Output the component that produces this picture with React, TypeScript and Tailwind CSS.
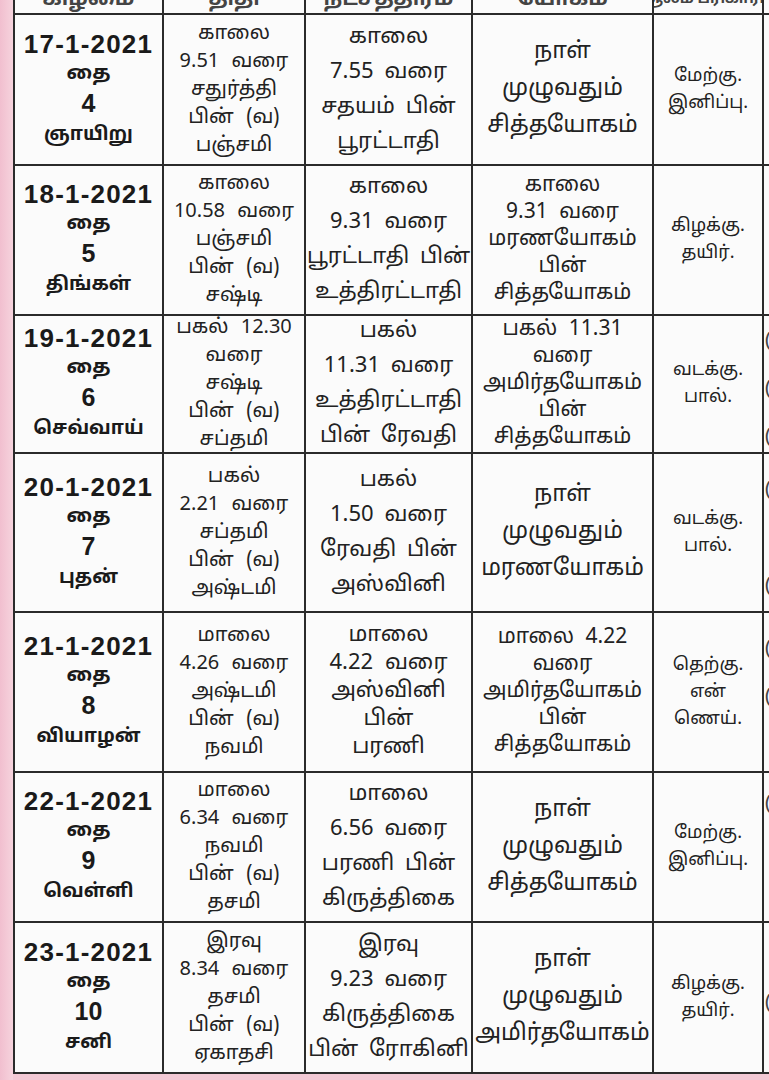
import React from 'react'

type Row = {
  date: string
  month: string
  day: string
  weekday: string
  thithi: string[]
  star: string[]
  yogam: string[]
  soolam: string[]
  edge: string[]
}

const rows: Row[] = [
  {
    date: '17-1-2021', month: 'தை', day: '4', weekday: 'ஞாயிறு',
    thithi: ['காலை', '9.51 வரை', 'சதுர்த்தி', 'பின் (வ)', 'பஞ்சமி'],
    star: ['காலை', '7.55 வரை', 'சதயம் பின்', 'பூரட்டாதி'],
    yogam: ['நாள்', 'முழுவதும்', 'சித்தயோகம்'],
    soolam: ['மேற்கு.', 'இனிப்பு.'],
    edge: ['', '', ''],
  },
  {
    date: '18-1-2021', month: 'தை', day: '5', weekday: 'திங்கள்',
    thithi: ['காலை', '10.58 வரை', 'பஞ்சமி', 'பின் (வ)', 'சஷ்டி'],
    star: ['காலை', '9.31 வரை', 'பூரட்டாதி பின்', 'உத்திரட்டாதி'],
    yogam: ['காலை', '9.31 வரை', 'மரணயோகம்', 'பின்', 'சித்தயோகம்'],
    soolam: ['கிழக்கு.', 'தயிர்.'],
    edge: ['', '', ''],
  },
  {
    date: '19-1-2021', month: 'தை', day: '6', weekday: 'செவ்வாய்',
    thithi: ['பகல் 12.30', 'வரை', 'சஷ்டி', 'பின் (வ)', 'சப்தமி'],
    star: ['பகல்', '11.31 வரை', 'உத்திரட்டாதி', 'பின் ரேவதி'],
    yogam: ['பகல் 11.31', 'வரை', 'அமிர்தயோகம்', 'பின்', 'சித்தயோகம்'],
    soolam: ['வடக்கு.', 'பால்.'],
    edge: ['(', '(', '('],
  },
  {
    date: '20-1-2021', month: 'தை', day: '7', weekday: 'புதன்',
    thithi: ['பகல்', '2.21 வரை', 'சப்தமி', 'பின் (வ)', 'அஷ்டமி'],
    star: ['பகல்', '1.50 வரை', 'ரேவதி பின்', 'அஸ்வினி'],
    yogam: ['நாள்', 'முழுவதும்', 'மரணயோகம்'],
    soolam: ['வடக்கு.', 'பால்.'],
    edge: ['(', '', '('],
  },
  {
    date: '21-1-2021', month: 'தை', day: '8', weekday: 'வியாழன்',
    thithi: ['மாலை', '4.26 வரை', 'அஷ்டமி', 'பின் (வ)', 'நவமி'],
    star: ['மாலை', '4.22 வரை', 'அஸ்வினி', 'பின்', 'பரணி'],
    yogam: ['மாலை 4.22', 'வரை', 'அமிர்தயோகம்', 'பின்', 'சித்தயோகம்'],
    soolam: ['தெற்கு.', 'என்', 'ணெய்.'],
    edge: ['(', '(', ''],
  },
  {
    date: '22-1-2021', month: 'தை', day: '9', weekday: 'வெள்ளி',
    thithi: ['மாலை', '6.34 வரை', 'நவமி', 'பின் (வ)', 'தசமி'],
    star: ['மாலை', '6.56 வரை', 'பரணி பின்', 'கிருத்திகை'],
    yogam: ['நாள்', 'முழுவதும்', 'சித்தயோகம்'],
    soolam: ['மேற்கு.', 'இனிப்பு.'],
    edge: ['(', '', ''],
  },
  {
    date: '23-1-2021', month: 'தை', day: '10', weekday: 'சனி',
    thithi: ['இரவு', '8.34 வரை', 'தசமி', 'பின் (வ)', 'ஏகாதசி'],
    star: ['இரவு', '9.23 வரை', 'கிருத்திகை', 'பின் ரோகினி'],
    yogam: ['நாள்', 'முழுவதும்', 'அமிர்தயோகம்'],
    soolam: ['கிழக்கு.', 'தயிர்.'],
    edge: ['', '(', ''],
  },
]

const tamil = { fontFamily: '"Noto Sans Tamil", "Lohit Tamil", "Latha", "Noto Sans", "DejaVu Sans", sans-serif' }

function Lines({ lines, className }: { lines: string[]; className: string }) {
  return (
    <div className={`flex h-full flex-col items-center justify-center bg-[#fbfbfb] text-center text-[#222] ${className}`} style={tamil}>
      {lines.map((l, i) => (
        <span key={i} className="whitespace-nowrap">{l}</span>
      ))}
    </div>
  )
}

export default function App() {
  return (
    <div className="flex h-[1080px] w-[769px] overflow-hidden bg-[#f3c9d5]">
      {/* pink edge of the page */}
      <div className="w-[13px] shrink-0 bg-gradient-to-r from-[#f1bfcf] to-[#f6d3dd]" />

      <div className="flex flex-1 flex-col overflow-hidden">
        <div className="grid grid-cols-[147px_140px_165px_179px_108px_1fr] grid-rows-[13px_149px_148px_136px_157px_158px_148px_149px] gap-[2px] bg-[#2b2b2b] pb-[2px] pl-[2px]">
          {/* header row, cut off by the top of the photo */}
          {['கிழமை', 'திதி', 'நட்சத்திரம்', 'யோகம்', 'சூலம் பரிகாரம்', ''].map((h, i) => (
            <div key={i} className="flex items-start justify-center overflow-hidden bg-[#fbfbfb]" style={tamil}>
              <span className={`whitespace-nowrap font-bold leading-[0px] text-[#444] ${i === 4 ? 'text-[15px]' : 'text-[21px]'}`}>{h}</span>
            </div>
          ))}

          {rows.map((r) => (
            <React.Fragment key={r.date}>
              <div className="flex flex-col items-center justify-center bg-[#fbfbfb] pt-[2px] text-[#1a1a1a]">
                <span className="font-['Liberation_Sans'] text-[26px] font-bold leading-[30px] tracking-[1.2px]">{r.date}</span>
                <span className="text-[20px] font-bold leading-[30px]" style={tamil}>{r.month}</span>
                <span className="font-['Liberation_Sans'] text-[25px] font-bold leading-[28px]">{r.day}</span>
                <span className="text-[19px] font-bold leading-[36px]" style={tamil}>{r.weekday}</span>
              </div>
              <Lines lines={r.thithi} className="text-[20px] leading-[28px] [word-spacing:7px]" />
              <Lines
                lines={r.star}
                className={r.star.length === 5 ? 'text-[22px] leading-[28px] [word-spacing:6px]' : 'text-[22px] leading-[35px] [word-spacing:5px]'}
              />
              <Lines
                lines={r.yogam}
                className={r.yogam.length === 5 ? 'text-[21px] leading-[27px] [word-spacing:6px]' : 'text-[23px] leading-[37px]'}
              />
              <Lines lines={r.soolam} className="text-[18px] leading-[27px]" />
              <div className="flex flex-col justify-center gap-6 overflow-hidden bg-[#fbfbfb] pl-[1px] text-[20px] text-[#444]">
                {r.edge.map((e, i) => (
                  <span key={i} className="h-6">{e}</span>
                ))}
              </div>
            </React.Fragment>
          ))}
        </div>
      </div>
    </div>
  )
}
